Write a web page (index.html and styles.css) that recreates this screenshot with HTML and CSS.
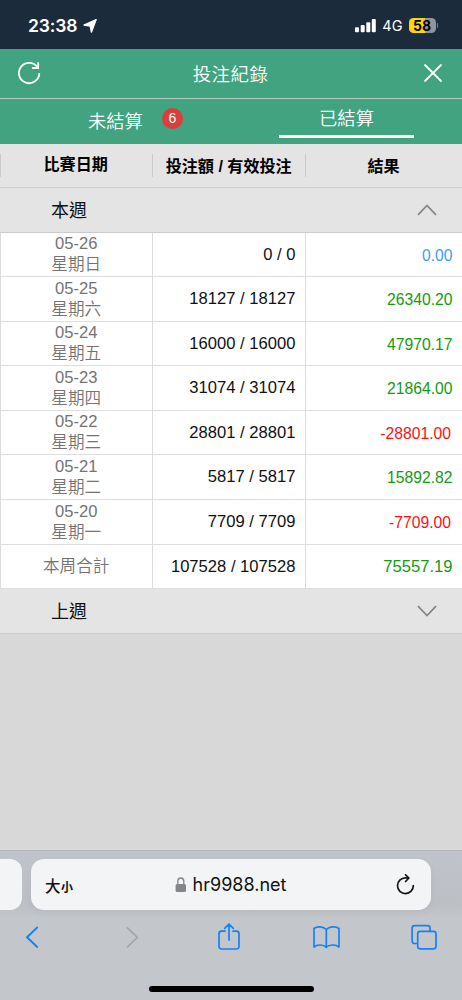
FILE: index.html
```
<!DOCTYPE html>
<html lang="zh-Hant">
<head>
<meta charset="utf-8">
<title>投注紀錄</title>
<link rel="stylesheet" href="styles.css">
</head>
<body>
<div class="screen">
  <header class="status">
    <div class="clock"><span>23:38</span>
      <svg width="14" height="14" viewBox="0 0 14 14"><path d="M13.2.6 8.4 13.2 7.2 7.1 1 6Z" fill="#fff" stroke="#fff" stroke-width="1.3" stroke-linejoin="round"/></svg>
    </div>
    <div class="signals">
      <svg width="21" height="14" viewBox="0 0 21 14" fill="#fff"><rect y="8.2" width="4" height="5" rx="1"/><rect x="5.7" y="6" width="4" height="7.2" rx="1"/><rect x="11.3" y="3.2" width="4" height="10" rx="1"/><rect x="16.8" y="0" width="4" height="13.2" rx="1"/></svg>
      <span class="network">4G</span>
      <span class="battery">58</span><i class="battery-tip"></i>
    </div>
  </header>
  <nav class="titlebar">
    <svg class="reload" width="24" height="24" viewBox="0 0 24 24" fill="none" stroke="#fff" stroke-width="1.8"><path d="M22.3 12A10.2 10.2 0 1 1 20.5 6.2"/><path d="M21.2 1.2V7H15.2"/></svg>
    <h1>投注紀錄</h1>
    <svg class="close" width="20" height="20" viewBox="0 0 20 20" stroke="#fff" stroke-width="1.8"><path d="M1.5 1.5 18.5 18.5M18.5 1.5 1.5 18.5"/></svg>
  </nav>
  <div class="tabs">
    <div class="tab pending"><span>未結算</span><b class="badge">6</b></div>
    <div class="tab settled"><span>已結算</span></div>
  </div>
  <div class="heads">
    <div class="head first">比賽日期</div><div class="head">投注額 / 有效投注</div><div class="head">結果</div>
  </div>
  <div class="week"><span>本週</span><svg width="20" height="12" viewBox="0 0 20 12" fill="none" stroke="#858585" stroke-width="1.7"><path d="M1 10.8 10 1.5 19 10.8"/></svg></div>
  <div class="table">
    <div class="row"><div class="date">05-26<br>星期日</div><div class="bet">0 / 0</div><div class="result even">0.00</div></div>
    <div class="row"><div class="date">05-25<br>星期六</div><div class="bet">18127 / 18127</div><div class="result">26340.20</div></div>
    <div class="row"><div class="date">05-24<br>星期五</div><div class="bet">16000 / 16000</div><div class="result">47970.17</div></div>
    <div class="row"><div class="date">05-23<br>星期四</div><div class="bet">31074 / 31074</div><div class="result">21864.00</div></div>
    <div class="row"><div class="date">05-22<br>星期三</div><div class="bet">28801 / 28801</div><div class="result loss">-28801.00</div></div>
    <div class="row"><div class="date">05-21<br>星期二</div><div class="bet">5817 / 5817</div><div class="result">15892.82</div></div>
    <div class="row"><div class="date">05-20<br>星期一</div><div class="bet">7709 / 7709</div><div class="result loss">-7709.00</div></div>
    <div class="row total"><div class="date">本周合計</div><div class="bet">107528 / 107528</div><div class="result">75557.19</div></div>
  </div>
  <div class="week"><span>上週</span><svg width="20" height="12" viewBox="0 0 20 12" fill="none" stroke="#858585" stroke-width="1.7"><path d="M1 1.2 10 10.5 19 1.2"/></svg></div>
  <div class="blank"></div>
  <footer class="browser">
    <div class="addresses">
      <div class="previous"></div>
      <div class="address">
        <span class="size">大<small>小</small></span>
        <div class="site"><svg width="12" height="16" viewBox="0 0 12 16"><rect x=".6" y="7" width="10.4" height="8" rx="1.5" fill="#85868a"/><path d="M2.8 7.5V4.2a3 3.2 0 0 1 6 0V7.5" fill="none" stroke="#85868a" stroke-width="1.3"/></svg><span>hr9988.net</span></div>
        <svg class="refresh" width="20" height="22" viewBox="0 0 20 22" fill="none" stroke="#151515" stroke-width="1.7" stroke-linecap="round" stroke-linejoin="round"><path d="M17.3 11.5A7.9 7.9 0 1 1 9.4 3.8L12.8 4M9.6 .9 12.9 4 9.6 7.5"/></svg>
      </div>
      <div class="next"></div>
    </div>
    <svg class="tools" width="462" height="34" viewBox="0 0 462 34" fill="none" stroke="#1681f5" stroke-width="1.7" stroke-linecap="round" stroke-linejoin="round">
      <path d="M37.2 9.5 27 19.2 37.2 29" stroke-width="1.9"/>
      <path d="M127.5 9.8 137.3 19.3 127.5 28.8" stroke="#a2a6aa"/>
      <path d="M225 13.2h-3.5a2.5 2.5 0 0 0-2.5 2.5v12.8a2.5 2.5 0 0 0 2.5 2.5h15a2.5 2.5 0 0 0 2.5-2.5V15.7a2.5 2.5 0 0 0-2.5-2.5H233M229 22V6M224.7 10.3 229 6l4.3 4.3"/>
      <path d="M326.3 11.5C323.500 8.300 317 8 314 10.500V29C317 26.300 323.500 26.300 326.300 29.300C329 26.300 336 26.300 339 29V10.500C336 8 329 8.300 326.300 11.500V29.300"/>
      <path d="M417.3 25.5h-2.8a2.4 2.4 0 0 1-2.4-2.4V10a2.4 2.4 0 0 1 2.4-2.4h13.1A2.4 2.4 0 0 1 430 10v3.3"/><rect x="417.7" y="13.4" width="18.3" height="17.4" rx="2.5"/>
    </svg>
    <div class="home"></div>
  </footer>
</div>
</body>
</html>
```
FILE: styles.css
```
* { box-sizing: border-box; }
body { margin: 0; }
svg { display: block; flex-shrink: 0; }
.screen {
  width: 462px; height: 1000px; overflow: hidden;
  display: flex; flex-direction: column;
  background: #d8d8d8;
  font-family: "Liberation Sans", "Noto Sans CJK TC", sans-serif;
}
.status {
  height: 49px; flex-shrink: 0; background: #1c2b3b; color: #fff;
  display: flex; justify-content: space-between; padding: 2px 24px 0 28px;
  font-family: Inter, "Liberation Sans", sans-serif;
}
.clock { display: flex; align-items: center; gap: 6px; font-size: 17.5px; font-weight: 600; letter-spacing: -.1px; }
.signals { display: flex; align-items: center; font-size: 14.5px; }
.network { margin-left: 6px; }
.battery {
  margin-left: 6px; width: 27px; height: 15px; border-radius: 4.5px;
  background: linear-gradient(90deg, #fbd60a 0 58%, #8e959d 58%);
  color: #000; font-size: 14px; font-weight: 700; line-height: 15px; text-align: center;
}
.battery-tip { width: 1.5px; height: 5px; margin-left: 1px; border-radius: 0 2px 2px 0; background: #78818a; }
.titlebar {
  height: 50px; flex-shrink: 0; background: #41a380; color: #fff; border-bottom: 1px solid #b8c9c1;
  display: flex; align-items: center; justify-content: space-between; padding: 0 19px 2px 17px;
}
h1 { margin: 0 1px 0 0; font-size: 18.5px; font-weight: 350; letter-spacing: .4px; }
.titlebar .reload { margin-right: -2px; }
.tabs { height: 44.5px; flex-shrink: 0; display: grid; grid-template-columns: 1fr 1fr; background: #41a380; color: #fff; font-size: 18.3px; font-weight: 350; }
.tab { display: flex; }
.pending { padding: 8.5px 0 0 88px; }
.pending span { line-height: 28px; }
.badge { margin: 0 0 0 19px; width: 21px; height: 21px; border-radius: 50%; background: #d9403a; font-size: 14px; font-weight: 400; line-height: 21px; text-align: center; }
.settled { width: 135px; height: 39px; margin-left: 48px; padding-top: 6px; justify-content: center; line-height: 28px; border-bottom: 3px solid #fff; }
.heads { height: 44.5px; flex-shrink: 0; display: grid; grid-template-columns: 152.4px 152.6px 1fr; align-items: center; background: #e4e4e4; border-bottom: 1.5px solid #cbcbcb; color: #000; font-size: 16.1px; font-weight: 700; }
.head { height: 23px; line-height: 24px; text-align: center; border-left: 1px solid #cbcbcb; white-space: nowrap; }
.head:not(.first) { padding-right: 1px; }
.head.first { line-height: 21px; padding-right: 2px; }
.week { height: 44.5px; flex-shrink: 0; display: flex; align-items: center; justify-content: space-between; padding: 0 25px 2px 51px; background: #e4e4e4; border-bottom: 1px solid #cbcbcb; font-size: 18px; color: #111; }
.week svg { margin-top: 2px; }
.table { flex-shrink: 0; background: #fff; }
.row { height: 44.6px; display: grid; grid-template-columns: 152.4px 152.6px 1fr; border-bottom: 1px solid #dedede; }
.row > div { border-left: 1px solid #dcdcdc; }
.date { display: flow-root; padding: .6px 1px 0 0; text-align: center; color: #747474; font-size: 16.6px; line-height: 21px; font-weight: 350; }
.bet { padding-right: 9.5px; text-align: right; font-size: 16.6px; line-height: 44px; color: #111; }
.result { padding-right: 9.5px; text-align: right; font-size: 15.7px; line-height: 46px; color: #16990f; }
.result.even { color: #429bf4; }
.result.loss { padding-right: 11px; color: #f31414; }
.total .date { line-height: 44px; }
.total .result { font-size: 16.6px; line-height: 44px; }
.blank { flex: 1; }
.browser { height: 150px; flex-shrink: 0; background: #c3c7cc; border-top: 1px solid #b3b5b8; }
.addresses { height: 67px; padding-top: 8px; display: flex; gap: 9px; background: linear-gradient(#c0c3c9, #bcc0c5 80%, #c3c7cc); }
.previous, .next { width: 22px; height: 51px; flex-shrink: 0; background: #f3f4f6; border-radius: 0 12px 12px 0; }
.next { visibility: hidden; }
.address { width: 400px; height: 51px; flex-shrink: 0; background: #f3f4f6; border-radius: 13px; box-shadow: 0 3px 9px #0000000b; display: flex; align-items: center; justify-content: space-between; padding: 0 15px 0 14px; color: #111; }
.size { width: 40px; margin-right: -20px; font-size: 15.5px; font-weight: 500; letter-spacing: .5px; }
.size small { font-size: 12px; font-weight: 700; }
.site { display: flex; align-items: center; gap: 6px; font-family: Inter, sans-serif; font-size: 18px; letter-spacing: 0; }
.site span { white-space: nowrap; }
.home { width: 165px; height: 6px; margin: 34px auto 0; border-radius: 3px; background: #000; }
```
